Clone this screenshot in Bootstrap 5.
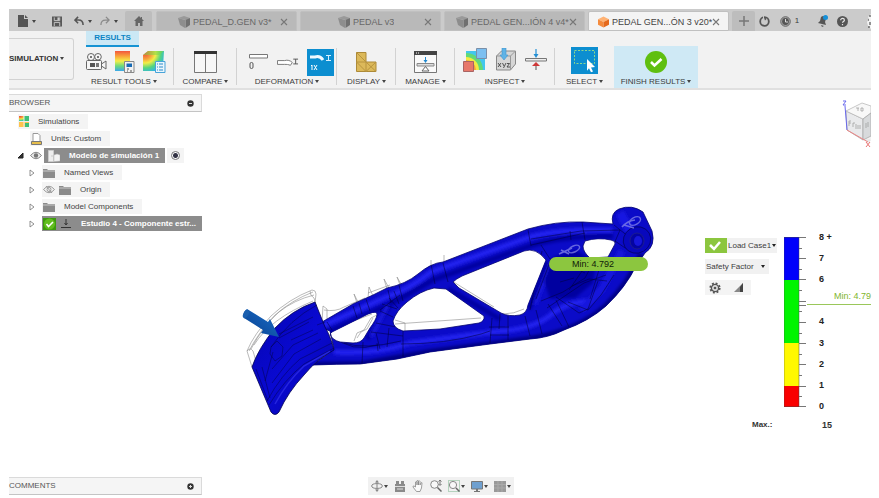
<!DOCTYPE html>
<html lang="en">
<head>
<meta charset="utf-8">
<meta name="viewport" content="width=device-width, initial-scale=1">
<title>Simulation results</title>
<link href="https://cdn.jsdelivr.net/npm/bootstrap@5.3.0/dist/css/bootstrap.min.css" rel="stylesheet">
<style>
body{font-family:"Liberation Sans",Arial,sans-serif;font-size:8px;line-height:10px;color:#3c3c3c;background:#fff}
svg{display:block;flex:none}
button,select{font:inherit;color:inherit;border:0;background:none;padding:0;white-space:nowrap}
.app{min-height:100vh;padding:9px 8px 3px 9px}
.topbar{background:#cbcbcb;height:22px;padding-top:2px;padding-left:8px;overflow:hidden}
.tools-left{width:108px}
.doc{flex:0 1 141px;min-width:0;background:#b9b9b9;color:#686868;font-size:9px;border:1px solid #c0c0c0;margin-right:3px;padding:1px 5px 0 21px;border-radius:2px 2px 0 0}
.doc.mid{padding-left:37px}
.doc.long{padding-left:11px}
.doc.current{background:#f4f4f4;color:#444;padding-left:9px}
.doc svg:first-child{margin-right:3px}
.doc-plain{background:#bdbdbd;border-radius:2px 2px 0 0}
.home{width:27px;margin-right:4px}
.plus{width:23px}
.crt{display:inline-block;width:0;height:0;border:2px solid transparent;border-top:3px solid #444;border-bottom:0;margin-left:2px;vertical-align:1px}
.ribbon{background:#f2f2f2;height:59px;border-bottom:2px solid #e0e0e0}
.workspace-btn{width:65px;margin:7px 0 8px;border:1px solid #d2d2d2;border-left:0;border-radius:0 3px 3px 0;font-weight:700;color:#333;overflow:hidden}
.tool-group{position:relative;padding-top:15px;width:59px;height:57px}
.tool-group>button:last-child{height:14px;padding-top:2px}
.tool-group:not(.last)::after{content:"";position:absolute;right:0;top:17px;bottom:3px;width:1px;background:#d2d2d2}
.icons{height:28px}
.g-result{width:100px}.g-compare{width:63px}.g-wide{width:100px}.g-finish{width:84px}
.g-finish::before{content:"";position:absolute;inset:15px 0 0;background:#cfe9f5}
.g-finish>*{position:relative}
.results-tab{position:absolute;top:0;left:12px;width:53px;height:16px;background:#cbe8f5;border-bottom:2px solid #1593d3;color:#0b84c4;font-weight:700}
.active-tool{background:#0c8ed0}
.side{width:193px}
.panel-head{height:18px;background:#f5f5f5;border:1px solid #dadada;border-left:0;border-bottom-color:#c4c4c4;padding-right:7px;color:#555}
.tree{gap:2px;padding-top:2px}
.tree li{height:15px;gap:2px}
.cell{background:#f4f4f4;height:15px;padding:0 9px 0 1px;gap:9px;color:#444;white-space:nowrap}
.cell.sel{background:#8c8c8c;color:#fff;font-weight:700;padding-right:6px}
.ind1{padding-left:9px}.ind2{padding-left:21px}.ind3{padding-left:20px}
.twist{width:11px}
.pick{appearance:none;width:9px;height:9px;margin:0;border:1px solid #777;border-radius:50%;background:radial-gradient(#334 0 2px,#fff 3px)}
.legend{width:171px;padding-top:10px}
.controls{padding:12px 0 0 5px;width:84px;gap:6px}
.drop{appearance:none;background:#f1f1f1 url("data:image/svg+xml,%3Csvg xmlns='http://www.w3.org/2000/svg' viewBox='0 0 4 3'%3E%3Cpath d='M0 0h4L2 3z' fill='%23222'/%3E%3C/svg%3E") no-repeat right 1px center/4px 3px;height:15px;width:50px;padding-left:1px;border-radius:0}
.drop.factor{width:64px;background-position:right 4px center}
.scale{margin-top:79px}
.ramp{padding-top:11px}
.ticks{height:191px;font-size:9px;font-weight:700;color:#222}
.ticks li{flex:1;padding-left:12px}
.minmark{height:15px;width:100%;border-bottom:1px solid #9ac75a;color:#7fb52e;font-weight:400;text-align:right;line-height:12px}
.maxrow{padding:3px 39px 0 52px;font-weight:700;color:#333}
.maxrow span:last-child{font-size:9px}
.navtools{background:#f1f1f1;height:18px;padding:0 3px;gap:6px;margin-left:166px}
.navtools .crt{margin-left:1px}
.model{min-width:0}
.tx{font-family:"Liberation Sans",Arial,sans-serif;font-size:9px}
</style>
<script src="https://cdn.jsdelivr.net/npm/bootstrap@5.3.0/dist/js/bootstrap.bundle.min.js"></script>
</head>
<body>
<svg width="0" height="0" class="position-absolute" aria-hidden="true">
<defs>
<linearGradient id="rain" x1="0" y1="0" x2="0" y2="1"><stop offset="0" stop-color="#f2553d"/><stop offset=".25" stop-color="#f9a13a"/><stop offset=".5" stop-color="#f5ee48"/><stop offset=".75" stop-color="#6edb7a"/><stop offset="1" stop-color="#3aa7ea"/></linearGradient>
<radialGradient id="heat" cx="0.1" cy="0.1" r="1"><stop offset="0" stop-color="#ef4a3a"/><stop offset=".3" stop-color="#f7a03c"/><stop offset=".5" stop-color="#f2ee45"/><stop offset=".75" stop-color="#55d67d"/><stop offset="1" stop-color="#2fb2ea"/></radialGradient>
<symbol id="folder" viewBox="0 0 12 10"><path d="M0 1h4l1 1h7v8H0z" fill="#8b8b8b"/><path d="M0 3h12" stroke="#c9c9c9"/></symbol>
<symbol id="tri" viewBox="0 0 6 8"><path d="M1 1l4 3-4 3z" fill="#fff" stroke="#777" stroke-width=".8"/></symbol>
<symbol id="eye" viewBox="0 0 12 8"><path d="M.5 4Q6-2.5 11.500 4 6 10.500.5 4z" fill="#eee" stroke="#858585"/><circle cx="6" cy="4" r="2.200" fill="#777"/></symbol>
<symbol id="cube" viewBox="0 0 12 12"><path d="M0 2l6-2 6 2-4 2z" fill="#999"/><path d="M0 2l7 2v8L2 9z" fill="#8d8d8d"/><path d="M7.500 4L12 2v7l-4.500 3z" fill="#707070"/></symbol>
<symbol id="x" viewBox="0 0 8 8"><path d="M1 1l6 6M7 1L1 7" stroke="#777" stroke-width="1.100"/></symbol>
</defs>
</svg>
<div class="app d-flex flex-column">
<header>
<div class="topbar d-flex">
  <div class="tools-left d-flex align-items-center flex-shrink-0">
    <button class="d-flex align-items-center me-3" aria-label="File"><svg width="11" height="12" viewBox="0 0 11 12"><path d="M1 0h6v4h4v8H1z" fill="#555"/><path d="M8 0l3 3H8z" fill="#555"/></svg><i class="crt ms-1"></i></button>
    <button class="me-2 pe-1" aria-label="Save"><svg width="10" height="11" viewBox="0 0 11 11"><path d="M0 0h11v11H0z" fill="#585858"/><path d="M2.500 1v3.500h6V1M2.500 10.500v-4h6v4" fill="none" stroke="#ccc"/><path d="M6 1h2v3H6z" fill="#ccc"/></svg></button>
    <button class="d-flex align-items-center me-2" aria-label="Undo"><svg width="10" height="10" viewBox="0 0 11 10"><path d="M4.500.5L1 4l3.500 3.500M1 4h4q5 0 5 5.500" fill="none" stroke="#555" stroke-width="1.700"/></svg><i class="crt ms-1"></i></button>
    <button class="d-flex align-items-center" aria-label="Redo"><svg width="10" height="10" viewBox="0 0 11 10"><path d="M6.500.5L10 4 6.500 7.500M10 4H6Q1 4 1 9.500" fill="none" stroke="#8a8a8a" stroke-width="1.400"/></svg><i class="crt ms-1"></i></button>
  </div>
  <button class="doc-plain home flex-shrink-0 d-flex align-items-center justify-content-center" aria-label="Home"><svg width="10" height="10" viewBox="0 0 10 10"><path d="M5 0L0 5h1.500v5H4V7h2v3h2.500V5H10L8 3V1H7v1z" fill="#666"/></svg></button>
  <div class="doc d-flex align-items-center"><svg width="12" height="12"><use href="#cube"/></svg><span class="text-truncate me-auto">PEDAL_D.GEN v3*</span><button aria-label="Close PEDAL_D.GEN"><svg width="8" height="8"><use href="#x"/></svg></button></div>
  <div class="doc mid d-flex align-items-center"><svg width="12" height="12"><use href="#cube"/></svg><span class="text-truncate me-auto">PEDAL v3</span><button aria-label="Close PEDAL v3"><svg width="8" height="8"><use href="#x"/></svg></button></div>
  <div class="doc long d-flex align-items-center"><svg width="12" height="12"><use href="#cube"/></svg><span class="text-nowrap me-auto">PEDAL GEN...IÓN 4 v4*</span><button aria-label="Close PEDAL GEN 4"><svg width="8" height="8"><use href="#x"/></svg></button></div>
  <div class="doc current d-flex align-items-center"><svg width="11" height="12" viewBox="0 0 12 12"><path d="M0 3l6-3 6 3-6 3z" fill="#ffb273"/><path d="M0 3l6 3v6L0 9z" fill="#f58b3c"/><path d="M12 3L6 6v6l6-3z" fill="#e56a1d"/></svg><span class="text-nowrap me-auto">PEDAL GEN...ÓN 3 v20*</span><button aria-label="Close PEDAL GEN 3"><svg width="8" height="8"><use href="#x"/></svg></button></div>
  <button class="doc-plain plus flex-shrink-0 d-flex align-items-center justify-content-center" aria-label="New tab"><svg width="10" height="10"><path d="M5 0v10M0 5h10" stroke="#777" stroke-width="1.500"/></svg></button>
  <div class="d-flex align-items-center justify-content-between flex-grow-1 ps-1 flex-shrink-0">
    <button aria-label="Extensions"><svg width="11" height="11" viewBox="0 0 11 11"><circle cx="5.500" cy="5.500" r="4.300" fill="none" stroke="#555" stroke-width="1.800"/><path d="M4.500 0v3.500l3-1v3" stroke="#cbcbcb" fill="none"/><path d="M5 1.500l3 1-2 2z" fill="#555"/></svg></button>
    <button class="d-flex align-items-center gap-1" aria-label="Job status 1"><svg width="11" height="11" viewBox="0 0 11 11"><circle cx="5.500" cy="5.500" r="4.800" fill="#aaa" stroke="#666"/><circle cx="5.500" cy="5.500" r="3.400" fill="#555"/><path d="M5.500 3v3h2.500" stroke="#ddd" fill="none"/></svg>1</button>
    <button class="ms-2" aria-label="Notifications"><svg width="11" height="12" viewBox="0 0 11 12"><path d="M1 8l2-2 1-4c2-2 5-1 5 2l-1 3 1 3z" fill="#555"/><path d="M4 10l3 1-2 1z" fill="#555"/><circle cx="8.500" cy="2.500" r="2.500" fill="#1690d8"/></svg></button>
    <button aria-label="Help"><svg width="11" height="11" viewBox="0 0 11 11"><circle cx="5.500" cy="5.500" r="5.500" fill="#555"/><path d="M3.700 4.200c0-2.400 3.700-2.300 3.700 0 0 1.300-1.900 1.200-1.900 2.500M5.500 8v1.300" stroke="#e5e5e5" stroke-width="1.200" fill="none"/></svg></button>
    <button class="ms-2" aria-label="Account"><svg width="5" height="17" viewBox="0 0 5 17"><path d="M5 1L2 4l1 2-2 3 1 4 3 3z" fill="#f3f3f3"/><path d="M3 3h2M2 7h1M4 9v3M2 14h2" stroke="#333"/></svg></button>
  </div>
</div>
<div class="ribbon d-flex">
  <button class="workspace-btn flex-shrink-0 text-start"><span>SIMULATION</span><i class="crt"></i></button>
  <div class="tool-group g-result d-flex flex-column align-items-center">
    <button class="results-tab">RESULTS</button>
    <div class="icons d-flex align-items-center gap-2 pt-1 ps-1">
      <svg width="21" height="19" viewBox="0 0 21 19"><g fill="#f6f6f6" stroke="#666"><circle cx="5" cy="4" r="3.500"/><circle cx="12" cy="3.800" r="3.300"/><rect x=".5" y="7.500" width="15" height="9" rx="1"/><path d="M15.500 11l4.500-3v8l-4.500-3z"/></g><path d="M4 10h5v4H4z" fill="#555"/><path d="M10 10h3v4h-3zM4 3h2v2H4zM11 3h2v2h-2z" fill="#777"/></svg>
      <svg width="20" height="22" viewBox="0 0 20 22"><path d="M0 0h15v20H0z" fill="url(#rain)"/><path d="M9.500 10.500h9.500v11H9.500z" fill="#f2f2f2" stroke="#888"/><path d="M11.500 12.500h5.500V16h-5.500z" fill="#176bb5"/><path d="M12 18h2M15 20h2M12 20h1" stroke="#555"/></svg>
      <svg width="23" height="22" viewBox="0 0 23 22"><path d="M0 4l5-4h16l-1 16-4 4H0z" fill="url(#heat)"/><path d="M0 4l5-4h16l-5 4z" fill="#7dd64a" opacity=".55"/><path d="M12.500 10.500H22v11h-9.500z" fill="#eaf6fc" stroke="#48a3d9"/><path d="M14 13h1m1 0h4M14 16h1m1 0h4M14 19h1m1 0h4" stroke="#2a8aca"/></svg>
    </div><button>RESULT TOOLS<i class="crt"></i></button>
  </div>
  <div class="tool-group g-compare d-flex flex-column align-items-center">
    <div class="icons d-flex align-items-center pt-1"><svg width="23" height="22" viewBox="0 0 23 22"><path d="M.5.500h22v21H.5z" fill="#f7f7f7" stroke="#777"/><path d="M11.500 2v20" stroke="#777"/><path d="M0 0h23v3H0z" fill="#333"/></svg></div><button>COMPARE<i class="crt"></i></button>
  </div>
  <div class="tool-group g-wide d-flex flex-column align-items-center">
    <div class="icons d-flex align-items-center gap-2 w-100 ps-2 pt-1">
      <svg class="ms-1" width="20" height="18" viewBox="0 0 20 18"><path d="M.5 1.500h18V5H.5z" fill="#fff" stroke="#777"/><rect x="1" y="9.500" width="3" height="6" rx="1.400" fill="none" stroke="#555"/></svg>
      <svg width="22" height="18" viewBox="0 0 23 18"><path d="M.5 7.500H8c3-1 6 0 8 2l-2 3c-2-1-4-1-6-1H.5z" fill="#fff" stroke="#777"/><path d="M17 6h5M17 11h5M19.500 6v5" stroke="#555"/></svg>
      <svg class="active-tool" width="27" height="27" viewBox="0 0 27 27"><path d="M3 8h5c3-1 6 0 8 3" stroke="#eef9ff" stroke-width="3" fill="none"/><path d="M19 6.500h5M19 11.500h5M21.500 6.500v5" stroke="#d5f0ff"/><path d="M4 17l1-1v5M7 16l3 5M10 16l-3 5" stroke="#fff" fill="none"/></svg>
    </div><button>DEFORMATION<i class="crt"></i></button>
  </div>
  <div class="tool-group d-flex flex-column align-items-center">
    <div class="icons d-flex align-items-center pt-1"><svg width="21" height="20" viewBox="0 0 21 20"><path d="M.5.500h9.500v9.500h10v9.500H.5z" fill="#dcb95a" stroke="#ad8a38"/><path d="M.5.500L10 10l10 9.500M.5 10H10v9.500M.5 10l9.500 9.500L20 10" stroke="#b8943f" fill="none"/></svg></div><button>DISPLAY<i class="crt"></i></button>
  </div>
  <div class="tool-group d-flex flex-column align-items-center">
    <div class="icons d-flex align-items-center pt-1"><svg width="23" height="22" viewBox="0 0 23 22"><path d="M.5.500h22v21H.5z" fill="#fafafa" stroke="#777"/><path d="M0 0h23v4H0z" fill="#444"/><path d="M2 2h1m1 0h1" stroke="#fff"/><path d="M11.500 6v5" stroke="#1e88d0"/><path d="M9.500 9h4l-2 3z" fill="#1e88d0"/><path d="M3 12.500h17V15H3z" fill="#ddd" stroke="#888"/><path d="M11.500 15.500L8 20h7z" fill="#fff" stroke="#666"/></svg></div><button>MANAGE<i class="crt"></i></button>
  </div>
  <div class="tool-group g-wide d-flex flex-column align-items-center">
    <div class="icons d-flex align-items-center gap-2">
      <svg width="24" height="24" viewBox="0 0 24 24"><path d="M3 3h19v19H3z" fill="#42c6ee"/><path d="M3 5a17 17 0 0 1 17 17H3z" fill="#62d978"/><path d="M3 9a13 13 0 0 1 13 13H3z" fill="#f2ea42"/><path d="M3 12a10 10 0 0 1 10 10H3z" fill="#f6a23a"/><path d="M13.500.500h10v10h-10z" fill="#7cbff0" stroke="#7a8fa8"/><path d="M.5 13.500h10v10H.5z" fill="#e7786a" stroke="#a86464"/></svg>
      <svg width="22" height="24" viewBox="0 0 22 24"><path d="M1.500 8l5-5h14v13l-5 6h-14z" fill="#d6d6d6" stroke="#888"/><path d="M1.500 8h14v14M15.500 8l5-5" fill="none" stroke="#999"/><path d="M7 0h4v7h2l-4 5-4-5h2z" fill="#5fb3e6" stroke="#4093cc" stroke-width=".6"/><path d="M3 15l3 4m0-4l-3 4M7.500 15l1.500 3m2-3l-2.500 5M12 15.500h2.500L12 19h3" fill="none" stroke="#444" stroke-width=".9"/></svg>
      <svg width="22" height="22" viewBox="0 0 22 22"><path d="M.5 9.500h21V12H.5z" fill="#eee" stroke="#777"/><path d="M11 0v7" stroke="#2490d5" stroke-width="1.200"/><path d="M8.500 5h5L11 9z" fill="#2490d5"/><path d="M11 14v7" stroke="#555"/><path d="M7 17l4-4 4 4z" fill="#cf3838"/></svg>
    </div><button>INSPECT<i class="crt"></i></button>
  </div>
  <div class="tool-group last d-flex flex-column align-items-center">
    <div class="icons d-flex align-items-center"><svg class="active-tool" width="27" height="27" viewBox="0 0 27 27"><path d="M3.500 3.500h20v13h-20z" fill="none" stroke="#8dd88e" stroke-dasharray="2 1.500"/><path d="M16 12l8 8-4 .5 2 4-2 .8-2-4-2 2.500z" fill="#fff"/></svg></div><button>SELECT<i class="crt"></i></button>
  </div>
  <div class="tool-group last g-finish d-flex flex-column align-items-center">
    <div class="icons d-flex align-items-center pt-1"><svg width="22" height="22" viewBox="0 0 22 22"><circle cx="11" cy="11" r="11" fill="#5fbf10"/><path d="M6 11l3.500 3.500L16.500 8" stroke="#fff" stroke-width="2.600" fill="none"/></svg></div><button>FINISH RESULTS<i class="crt"></i></button>
  </div>
</div>
</header>
<main class="d-flex flex-grow-1">
  <nav class="side flex-shrink-0 pt-1" aria-label="Browser">
    <div class="panel-head d-flex align-items-center justify-content-between"><span>BROWSER</span><button aria-label="Collapse browser"><svg width="7" height="7"><circle cx="3.500" cy="3.500" r="3.200" fill="#333"/><path d="M2 3.500h3" stroke="#ddd"/></svg></button></div>
    <ul class="tree list-unstyled d-flex flex-column mb-0">
      <li class="d-flex ind1"><div class="cell d-flex align-items-center"><svg width="10" height="11" viewBox="0 0 10 11"><path d="M0 0h10v5H0z" fill="url(#heat)"/><path d="M0 6h10v5H0z" fill="#ffc34d"/><path d="M5 0h5v5H5zM6 7h4v4H6z" fill="#3fbf78"/><path d="M5 0v11M0 5.500h10" stroke="#eee"/></svg>Simulations</div></li>
      <li class="d-flex ind2"><div class="cell d-flex align-items-center"><svg width="11" height="12" viewBox="0 0 11 12"><path d="M2 .5h5l2 2V9H2z" fill="#fff" stroke="#999"/><path d="M.5 8.500h10v3H.5z" fill="#e5bd4c" stroke="#777"/></svg>Units: Custom</div></li>
      <li class="d-flex align-items-center ps-1"><button class="twist ps-1" aria-label="Collapse"><svg width="7" height="7"><path d="M6 1v5H1z" fill="#333" stroke="#222"/></svg></button><button class="ms-1" aria-label="Hide"><svg width="12" height="9"><use href="#eye"/></svg></button>
        <div class="cell sel d-flex align-items-center ps-1"><svg width="12" height="12" viewBox="0 0 12 12"><path d="M.5.500h5v11h-5zM3 6h3" fill="#eee" stroke="#ccc"/><path d="M6 5l3-1 3 1v6l-6 .5z" fill="#f4f4f4" stroke="#bbb" stroke-width=".5"/></svg>Modelo de simulación 1</div><label class="cell px-1 d-flex align-items-center"><input type="radio" class="pick" checked aria-label="Activate Modelo de simulación 1"></label></li>
      <li class="d-flex align-items-center ind3"><button class="twist" aria-label="Expand"><svg width="6" height="8"><use href="#tri"/></svg></button><div class="cell d-flex align-items-center"><svg width="12" height="10"><use href="#folder"/></svg>Named Views</div></li>
      <li class="d-flex align-items-center ind3"><button class="twist" aria-label="Expand"><svg width="6" height="8"><use href="#tri"/></svg></button><div class="cell d-flex align-items-center"><span class="d-flex align-items-center gap-1"><svg width="12" height="9" viewBox="0 0 12 9"><path d="M.5 4.500Q6-2 11.500 4.500 6 11 .5 4.500z" fill="none" stroke="#999"/><circle cx="6" cy="4.500" r="2" fill="none" stroke="#999"/><path d="M3 1l6 7" stroke="#999"/></svg><svg width="12" height="10"><use href="#folder"/></svg></span>Origin</div></li>
      <li class="d-flex align-items-center ind3"><button class="twist" aria-label="Expand"><svg width="6" height="8"><use href="#tri"/></svg></button><div class="cell d-flex align-items-center"><svg width="12" height="10"><use href="#folder"/></svg>Model Components</div></li>
      <li class="d-flex align-items-center ind3"><button class="twist" aria-label="Expand"><svg width="6" height="8"><use href="#tri"/></svg></button><div class="cell sel d-flex align-items-center flex-grow-1"><span class="d-flex align-items-center gap-1"><svg width="13" height="12" viewBox="0 0 13 12"><path d="M0 0h13v12H0z" fill="#3c9a0c"/><circle cx="6.500" cy="6" r="5.500" fill="#62bd1e"/><path d="M3.500 6l2 2.500L10 4" stroke="#fff" stroke-width="1.600" fill="none"/></svg><svg width="12" height="10" viewBox="0 0 12 10"><path d="M6 0v5M4.500 4L6 6l1.500-2M1 8.500h10" stroke="#333" fill="none"/></svg></span>Estudio 4 - Componente estr...</div></li>
    </ul>
  </nav>
  <section class="model flex-grow-1 d-flex" aria-label="Model">
  <svg class="w-100 h-100" viewBox="202 89 498 386" preserveAspectRatio="xMidYMin meet">
    <defs>
      <linearGradient id="plate" x1="0" y1="0" x2="1" y2="1"><stop offset="0" stop-color="#0505ae"/><stop offset=".5" stop-color="#0909d2"/><stop offset="1" stop-color="#0505a4"/></linearGradient>
      <linearGradient id="arrow" x1="0" y1="1" x2="1" y2="0"><stop offset="0" stop-color="#083f8d"/><stop offset="1" stop-color="#1a6fcb"/></linearGradient>
      <filter id="soft" filterUnits="userSpaceOnUse" x="202" y="180" width="498" height="250"><feGaussianBlur stdDeviation="1.500"/></filter>
      <clipPath id="bodyclip"><path id="bodyp" clip-rule="evenodd" fill-rule="evenodd" d="M322 321L353 303 373 294 387 287Q406 283 418 273 431 262 443 261L528 228Q556 220 583 221L613 223Q610 212 619 208 632 203 643 211L652 230Q656 245 645 252L636 265Q626 286 606 305 589 320 564 329 548 337 530 338L490 343 430 351 397 358 360 363Q337 363 313 364L334 348 330 330 320 326Z
      M330 333Q331 331 336 329L368 313Q378 309 377 314 376 319 370 327L364 337Q361 342 353 342L340 341Q332 339 330 333Z
      M434 287Q420 290 407 301 396 310 393 320 393 327 403 330L440 328 479 322Q485 320 484 315L446 288Z
      M453 281Q456 278 462 275L524 250Q536 246 546 259L528 304Q527 312 520 314 509 316 501 312L459 287Z
      M585 240Q598 236 611 239 616 240 615 243L608 256 590 257Q583 251 583 245Z"/></clipPath>
    </defs>
    <g fill="none" stroke="#8b8b8b" stroke-width=".6">
      <path d="M247 350Q254 333 271 315 289 298 312 289q4 0 4 4l-1 9M247 350l5 16M251 348Q263 325 279 311 294 299 314 294M247 350q3-4 6 0l5 17M254 344Q270 318 313 300M310 290q0 5 4 7l10 35M249 350Q258 332 275 314 292 299 313 291"/>
      <path d="M322 321l1-16 4 3v12M324 309q12 2 20-3l21-9M357 302l-3-9 6 12M368 297l1-11 4 9M387 288l-3-10 5 9M400 284l-3-8 4 7M431 268v-9M444 262v-8M368 292l22-8"/>
      <path d="M330 329l42-16M354 340l3-8 7-3 7-12 8-4M357 337l4-6 6-3 6-11M395 323l86-6M395 319l10 3v8M452 280l42 26M503 313q11 0 21-5"/>
    </g>
    <use href="#bodyp" fill="#0b0bc8" stroke="#05056c" stroke-width=".8"/>
    <g clip-path="url(#bodyclip)" fill="none">
      <g filter="url(#soft)">
      <path d="M322 334L390 303Q411 292 433 279L530 245Q560 235 613 235" stroke="#0303a0" stroke-width="5"/>
      <path d="M322 325L384 297Q410 288 431 271L530 236Q556 228 612 229" stroke="#2424f0" stroke-width="5"/>
      <path d="M334 351Q375 354 410 342L492 331Q530 329 548 316 562 303 586 300" stroke="#2222ee" stroke-width="5"/>
      <path d="M313 364L362 363 430 351 530 338Q579 330 606 305 631 280 641 253" stroke="#020284" stroke-width="6"/>
      <path d="M546 260l-17 48M390 304l-23 34M448 288l52 30" stroke="#0303a0" stroke-width="5"/>
      <path d="M552 260l-17 44M388 304l-17 32" stroke="#1717dd" stroke-width="4"/>
      <path d="M553 256l23-7 20 13-3 20-18 15-25 1-6-18z" fill="#0404a0"/>
      <path d="M622 250l-20 38-21 21" stroke="#1717dd" stroke-width="7"/>
      <path d="M620 212l18 32" stroke="#1717e2" stroke-width="9"/>
      </g>
      <g stroke="#020238" stroke-width=".6" stroke-opacity=".85">
        <path d="M431 263l4 20M443 262l5 19M528 229l3 16M570 230l1 9M582 221l3 18M531 238l50-8 39-1M531 244l54-12M541 244l9 14 40 3 15-7M542 250l-12 59M551 258l-15 40M591 257l-22 32M602 259l-12 39M541 300l22-9 22-14 9-17M547 307l37-25 22-8M556 296l23 16 9-4 10-28M548 303l14 22M556 299l13 27M536 309l6 24M525 315l5 20M568 301l20 8 13-15 13-20M572 285l17-7 18 2M555 270l20-3 10 5M560 281l14-4"/>
        <path d="M492 317l-2 25M500 313l-1 15M508 315v24M489 326h20M490 334h19M401 343q45 0 80-10l9-3M403 329v27M377 342l1 8M363 341l-1 22M344 342q20 7 57-2M371 331l32 4M376 322l20 4M380 310l13 6M382 303l15 5M389 297l9 10M394 290l5 13M380 309l20-15M366 298l4 12M359 302l3 11M353 305l4 12M327 321l5 8M388 289l3 13M399 284l4 16M376 332l4 16M389 327l-2 19M333 335q18 17 45 9M614 224l31 25M615 240l16 11M620 229l-6 14"/>
      </g>
    </g>
    <ellipse cx="637" cy="239" rx="14" ry="13" transform="rotate(-30 637 239)" fill="#0808bd" stroke="#03036c" stroke-width=".8"/><ellipse cx="637" cy="240" rx="7" ry="8" fill="#0404a1" stroke="#222288" stroke-width=".8"/><ellipse cx="638" cy="240" rx="4" ry="5" fill="#1616da"/>
    <g fill="none" stroke="#8585e8" stroke-width="1.500" opacity=".75"><ellipse cx="635" cy="220" rx="6" ry="3.500" transform="rotate(-30 635 220)"/><path d="M622 226q5-6 13-7M624 224l10 3M559 253l13-6M561 249l8 4"/><ellipse cx="574" cy="248" rx="6" ry="3" transform="rotate(-25 574 248)"/></g>
    <path d="M315 301Q292 309 275 327 258 348 252 366L271 411Q275 416 279 411 288 391 304 374 318 357 334 349Q330 334 325 326Z" fill="url(#plate)" stroke="#03034f" stroke-width=".8"/>
    <path d="M275 403Q287 381 304 365L330 350" stroke="#2525df" stroke-width="1.500" fill="none"/>
    <g fill="none" stroke="#03033f" stroke-width=".6" stroke-opacity=".75"><path d="M317 304Q290 318 271 346M262 366l8 31M267 400Q281 374 300 358L332 342M269 404Q284 379 304 363L334 347M256 368l12 32M313 316l-34 17M309 321l-30 16M318 332l-25 12-21 24M321 338l-27 15-22 29M271 346l6-6 6 6-1 9-7 5-5-7zM273 351l-8 29M317 324l8-3M313 329l-22 10"/></g>
    <path d="M247 308l21 13 2-3 9 18-18-4 2-3-19-12q-2-6 3-9z" fill="url(#arrow)"/><ellipse cx="246" cy="313" rx="2.500" ry="4.500" transform="rotate(30 246 313)" fill="#1a5fae"/>
    <rect x="549" y="256" width="99" height="14" rx="7" fill="#8cc63f"/>
    <text class="tx" x="572" y="266" fill="#10200a">Min: 4.792</text>
  </svg>
  </section>
  <aside class="legend flex-shrink-0">
    <svg class="ms-auto" width="29" height="47" viewBox="0 0 29 47"><path d="M6 31l21 12 2-3-14-15z" fill="#e7e7e7"/><path d="M4 11l16-8 9 3v33l-8 1L5 30z" fill="#f3f3f3"/><path d="M4 11l17 8v21L5 30z" fill="#e9eaec" stroke="#aaa" stroke-width=".8"/><path d="M4 11l16-8 9 3v7l-8 6z" fill="#f8f8f8" stroke="#bbb" stroke-width=".8"/><path d="M21 19l8-6v23l-8 4z" fill="#d8dadc" stroke="#aaa" stroke-width=".8"/><path d="M5 30L3 6" stroke="#6868ed"/><path d="M1 1h3L1 5h3" stroke="#6868ed" fill="none"/><path d="M5 30l21 12" stroke="#ed8585"/><path d="M24 42l4 5m0-5l-4 5" stroke="#e97474"/><path d="M7 21v5m0-5h2m-2 2h2m2 0v4m0-4h2m1 1v5m2-4v4m2-4v4M14 8h3m-1 0v3m3-3v3h2V8zM24 23v5m2-6v5" stroke="#999" stroke-width=".7" fill="none"/></svg>
    <div class="scale d-flex">
      <div class="controls d-flex flex-column">
        <div class="d-flex"><svg width="22" height="15" viewBox="0 0 22 15"><path d="M0 0h22v15H0z" fill="#8cc63f"/><path d="M5 7l4 4 6-7" stroke="#fff" stroke-width="2.500" fill="none"/></svg><select class="drop" aria-label="Load case"><option>Load Case1</option></select></div>
        <select class="drop factor" aria-label="Result type"><option>Safety Factor</option></select>
        <div class="d-flex"><span class="cell d-flex align-items-center px-1"><button aria-label="Settings"><svg width="12" height="12" viewBox="0 0 12 12"><circle cx="6" cy="6" r="4.700" fill="none" stroke="#555" stroke-width="1.800" stroke-dasharray="1.900 1.800"/><circle cx="6" cy="6" r="3.600" fill="#ddd" stroke="#555" stroke-width="1.300"/><circle cx="6" cy="6" r="1.300" fill="#555"/></svg></button><button aria-label="Slices" class="ms-1 pe-1"><svg width="9" height="9" viewBox="0 0 9 9"><path d="M9 0v9H0z" fill="#888"/><path d="M9 0v9H6V4z" fill="#444"/></svg></button></span></div>
      </div>
      <div class="ramp"><svg width="23" height="170" viewBox="0 0 23 170"><path d="M0 0h15v43H0z" fill="#0000fb"/><path d="M0 43h15v63H0z" fill="#00f400"/><path d="M0 106h15v43H0z" fill="#fff800"/><path d="M0 149h15v21H0z" fill="#f90000"/><path d="M0 0v170M15 0v170M0 .5h15M0 169.500h15" stroke="#444" stroke-opacity=".45"/><path d="M15 .5h7M15 21.500h7M15 42.500h7M15 64.500h7M15 68.500h7M15 85.500h7M15 106.500h7M15 127.500h7M15 149.500h7M15 169.500h7M15 11.500h3M15 32.500h3M15 53.500h3M15 74.500h3M15 96.500h3M15 117.500h3M15 138.500h3M15 159.500h3" stroke="#777"/></svg></div>
      <ul class="ticks list-unstyled d-flex flex-column flex-grow-1 mb-0">
        <li class="d-flex align-items-center">8 +</li><li class="d-flex align-items-center">7</li><li class="d-flex align-items-center">6</li><li class="ps-0"><div class="minmark">Min: 4.79</div></li><li class="d-flex align-items-center">4</li><li class="d-flex align-items-center">3</li><li class="d-flex align-items-center">2</li><li class="d-flex align-items-center">1</li><li class="d-flex align-items-center">0</li>
      </ul>
    </div>
    <div class="maxrow d-flex justify-content-between"><span>Max.:</span><span>15</span></div>
  </aside>
</main>
<footer class="d-flex align-items-center">
  <div class="side panel-head d-flex align-items-center justify-content-between flex-shrink-0"><span>COMMENTS</span><button aria-label="Add comment"><svg width="7" height="7"><circle cx="3.500" cy="3.500" r="3.200" fill="#333"/><path d="M2 3.500h3M3.500 2v3" stroke="#ddd"/></svg></button></div>
  <div class="navtools d-flex align-items-center">
    <button class="d-flex align-items-center" aria-label="Orbit"><svg width="12" height="12" viewBox="0 0 12 12"><path d="M6 0L4 2.500h1.500v7H4L6 12l2-2.500H6.500v-7H8z" fill="#888"/><ellipse cx="6" cy="6" rx="5.300" ry="2.400" fill="none" stroke="#888"/></svg><i class="crt"></i></button>
    <button aria-label="Look at"><svg width="12" height="11" viewBox="0 0 12 11"><path d="M1 3h10v8H1zM2 0h3v3H2zM7 0h3v3H7z" fill="#8a8a8a"/><path d="M1 5.500h10M3 8h6" stroke="#ddd"/></svg></button>
    <button aria-label="Pan"><svg width="12" height="12" viewBox="0 0 12 12"><path d="M3.500 7V2q1-1.500 1.500 0v3-4q1-1.500 1.500 0v4-3.500q1-1.500 1.500 0V5l1-2q1-1 1 0L9.500 8 8 11.500H4.500L1 7q0-1.500 1-1z" fill="#fafafa" stroke="#888" stroke-width=".8"/></svg></button>
    <button aria-label="Zoom"><svg width="12" height="12" viewBox="0 0 12 12"><circle cx="4.500" cy="4.500" r="3.800" fill="#f8f8f8" stroke="#888"/><path d="M7.500 7.500l4 4" stroke="#666" stroke-width="1.500"/><path d="M10 0v5M8.500 1.500L10 0l1.500 1.500M8.500 4L10 5.500 11.500 4" fill="none" stroke="#777"/></svg></button>
    <button class="d-flex align-items-center" aria-label="Zoom window"><svg width="12" height="12" viewBox="0 0 12 12"><path d="M.5.500h11v11H.5z" fill="none" stroke="#79b58a" stroke-dasharray="1 1"/><circle cx="5" cy="5" r="3.600" fill="#f8f8f8" stroke="#888"/><path d="M8 8l3.500 3.500" stroke="#666" stroke-width="1.500"/></svg><i class="crt"></i></button>
    <button class="d-flex align-items-center" aria-label="Display settings"><svg width="12" height="11" viewBox="0 0 12 11"><path d="M.5.500h11V8H.5z" fill="#6fa0d0" stroke="#777"/><path d="M5 8h2v2h2v1H3v-1h2z" fill="#777"/></svg><i class="crt"></i></button>
    <button class="d-flex align-items-center" aria-label="Grid and layout"><svg width="12" height="11" viewBox="0 0 12 11"><path d="M0 0h12v11H0z" fill="#999"/><path d="M0 3.500h12M0 7h12M4 0v11M8 0v11" stroke="#aaa"/></svg><i class="crt"></i></button>
  </div>
</footer>
</div>
</body>
</html>
